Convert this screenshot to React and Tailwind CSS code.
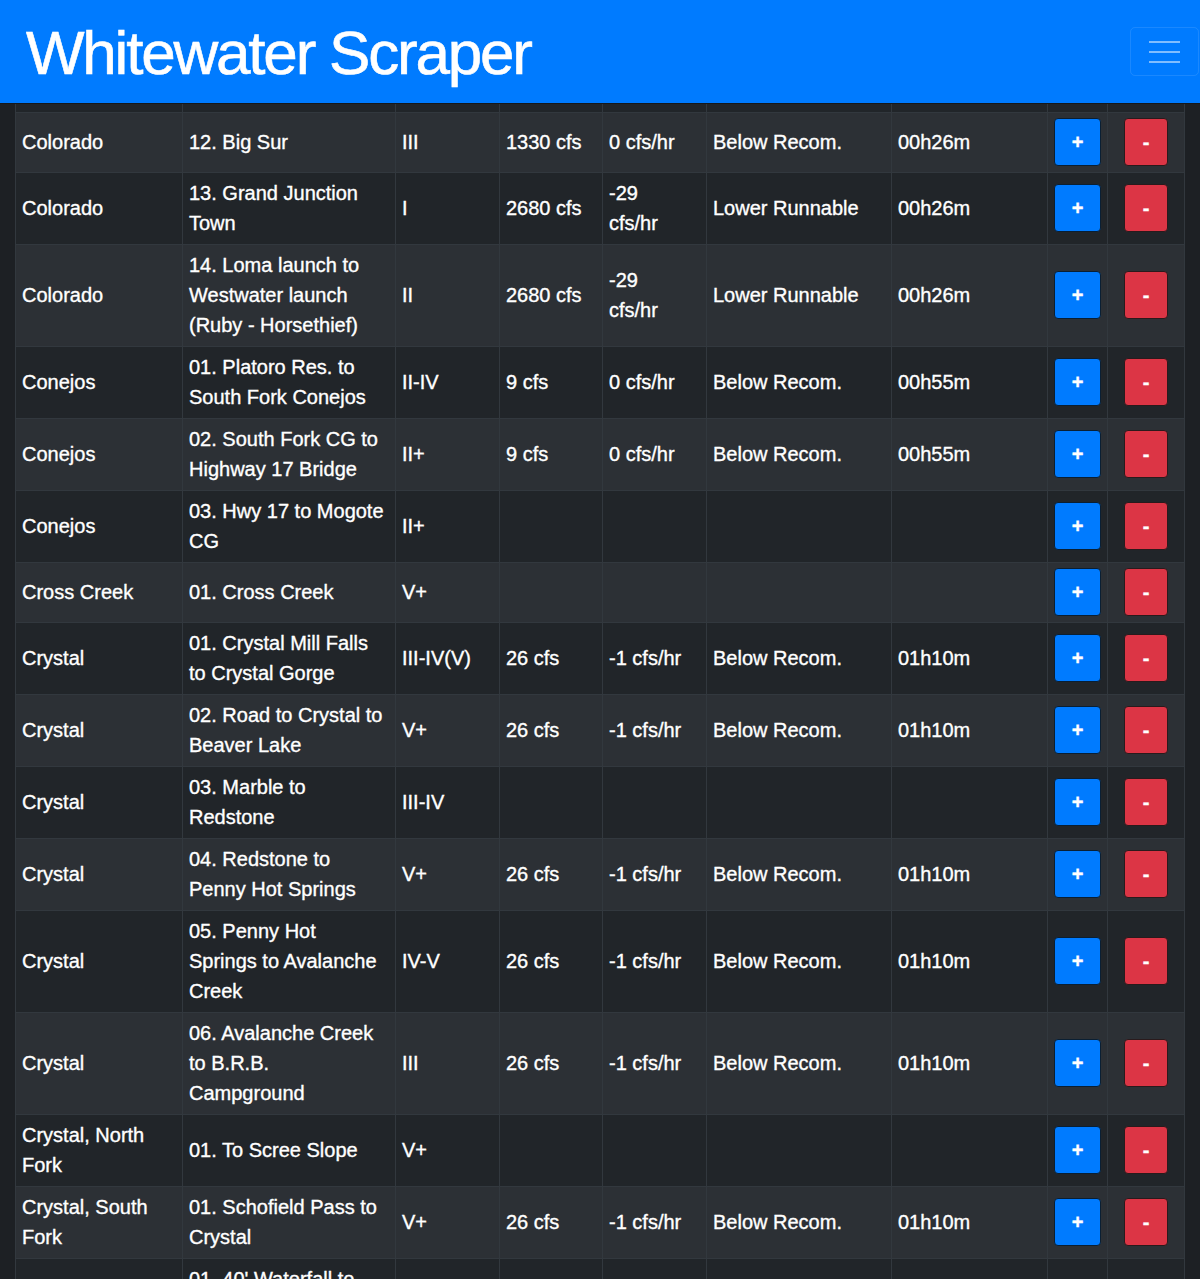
import React from "react";

const rows = [
  ["Colorado", ["12. Big Sur"], "III", "1330 cfs", ["0 cfs/hr"], "Below Recom.", "00h26m"],
  ["Colorado", ["13. Grand Junction", "Town"], "I", "2680 cfs", ["-29", "cfs/hr"], "Lower Runnable", "00h26m"],
  ["Colorado", ["14. Loma launch to", "Westwater launch", "(Ruby - Horsethief)"], "II", "2680 cfs", ["-29", "cfs/hr"], "Lower Runnable", "00h26m"],
  ["Conejos", ["01. Platoro Res. to", "South Fork Conejos"], "II-IV", "9 cfs", ["0 cfs/hr"], "Below Recom.", "00h55m"],
  ["Conejos", ["02. South Fork CG to", "Highway 17 Bridge"], "II+", "9 cfs", ["0 cfs/hr"], "Below Recom.", "00h55m"],
  ["Conejos", ["03. Hwy 17 to Mogote", "CG"], "II+", "", [""], "", ""],
  ["Cross Creek", ["01. Cross Creek"], "V+", "", [""], "", ""],
  ["Crystal", ["01. Crystal Mill Falls", "to Crystal Gorge"], "III-IV(V)", "26 cfs", ["-1 cfs/hr"], "Below Recom.", "01h10m"],
  ["Crystal", ["02. Road to Crystal to", "Beaver Lake"], "V+", "26 cfs", ["-1 cfs/hr"], "Below Recom.", "01h10m"],
  ["Crystal", ["03. Marble to", "Redstone"], "III-IV", "", [""], "", ""],
  ["Crystal", ["04. Redstone to", "Penny Hot Springs"], "V+", "26 cfs", ["-1 cfs/hr"], "Below Recom.", "01h10m"],
  ["Crystal", ["05. Penny Hot", "Springs to Avalanche", "Creek"], "IV-V", "26 cfs", ["-1 cfs/hr"], "Below Recom.", "01h10m"],
  ["Crystal", ["06. Avalanche Creek", "to B.R.B.", "Campground"], "III", "26 cfs", ["-1 cfs/hr"], "Below Recom.", "01h10m"],
  [["Crystal, North", "Fork"], ["01. To Scree Slope"], "V+", "", [""], "", ""],
  [["Crystal, South", "Fork"], ["01. Schofield Pass to", "Crystal"], "V+", "26 cfs", ["-1 cfs/hr"], "Below Recom.", "01h10m"],
  ["Cumbres", ["01. 40' Waterfall to", "Los Pinos River", "Bridge"], "V", "", [""], "", ""],
];

const cell =
  "border border-[#32383e] px-[6px] py-[5.5px] align-middle text-[20px] leading-[30px] text-white [-webkit-text-stroke:0.35px_#ffffff]";

function Lines({ v }) {
  const arr = Array.isArray(v) ? v : [v];
  return arr.map((l, i) => (
    <React.Fragment key={i}>
      {i > 0 && <br />}
      {l}
    </React.Fragment>
  ));
}

export default function App() {
  return (
    <div
      className="h-[1279px] w-[1200px] overflow-hidden bg-[#1d2024]"
      style={{ fontFamily: '"Liberation Sans", Arial, sans-serif' }}
    >
      <nav className="flex h-[104px] items-center justify-between border-b border-[#16181b] bg-[#007bff] pl-[26px] pr-[1px]">
        <div className="mt-[3px] text-[62px] leading-none tracking-[-2.2px] text-white [-webkit-text-stroke:0.6px_#ffffff]">
          Whitewater Scraper
        </div>
        <div className="flex h-[49px] w-[69px] flex-col items-center justify-center gap-[8px] rounded-[5px] border border-white/10">
          <span className="block h-[2px] w-[31px] bg-white/50" />
          <span className="block h-[2px] w-[31px] bg-white/50" />
          <span className="block h-[2px] w-[31px] bg-white/50" />
        </div>
      </nav>
      <div className="pl-[15px]">
        <table className="w-[1169px] table-fixed border-collapse">
          <colgroup>
            <col className="w-[167px]" />
            <col className="w-[213px]" />
            <col className="w-[104px]" />
            <col className="w-[103px]" />
            <col className="w-[104px]" />
            <col className="w-[185px]" />
            <col className="w-[156px]" />
            <col className="w-[60px]" />
            <col className="w-[77px]" />
          </colgroup>
          <tbody>
            <tr className="bg-[#212529]">
              {Array.from({ length: 9 }).map((_, i) => (
                <td key={i} className="h-[8px] border border-t-0 border-[#32383e] p-0" />
              ))}
            </tr>
            {rows.map((r, i) => (
              <tr key={i} className={i % 2 === 0 ? "bg-[#2c3035]" : "bg-[#212529]"}>
                <td className={cell}><Lines v={r[0]} /></td>
                <td className={cell + " whitespace-nowrap"}><Lines v={r[1]} /></td>
                <td className={cell}>{r[2]}</td>
                <td className={cell}>{r[3]}</td>
                <td className={cell + " whitespace-nowrap"}><Lines v={r[4]} /></td>
                <td className={cell}>{r[5]}</td>
                <td className={cell}>{r[6]}</td>
                <td className={cell}>
                  <button className="mx-auto flex h-[48px] w-[47px] items-center justify-center rounded-[4px] border border-[#0a1f33] bg-[#007bff] text-[20px] font-bold text-white">
                    +
                  </button>
                </td>
                <td className={cell}>
                  <button className="mx-auto flex h-[48px] w-[44px] items-center justify-center rounded-[4px] border border-[#2a1a1c] bg-[#dc3545] text-[20px] font-bold text-white">
                    -
                  </button>
                </td>
              </tr>
            ))}
          </tbody>
        </table>
      </div>
    </div>
  );
}
